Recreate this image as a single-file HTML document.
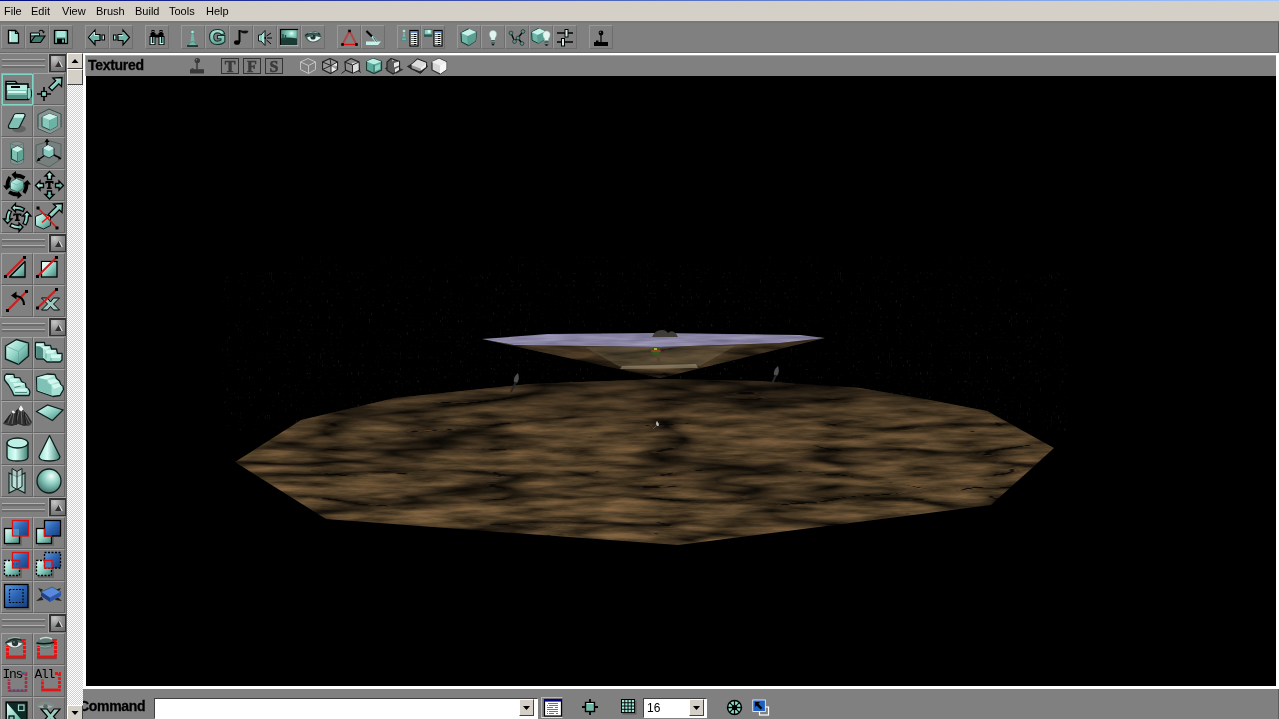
<!DOCTYPE html>
<html><head><meta charset="utf-8">
<style>
*{margin:0;padding:0;box-sizing:border-box}
html,body{width:1279px;height:719px;overflow:hidden;background:#808080;font-family:"Liberation Sans",sans-serif}
.gs{will-change:transform}
.a{position:absolute}
#top{left:0;top:0;width:1279px;height:1px;background:linear-gradient(90deg,#000a80,#a0c8ff)}
#menu{left:0;top:1px;width:1279px;height:20px;background:#d4d0c8;font-size:11px;color:#000}
#menu span{position:absolute;top:4px}
#tb{left:0;top:21px;width:1279px;height:32px;background:#808080;border-top:2px solid #787878;border-bottom:1px solid #6a6a6a;border-right:1px solid #5e5e5e}
.tbtn{position:absolute;top:25px;width:24px;height:24px;border:1px solid #999;border-right-color:#6e6e6e;border-bottom-color:#6e6e6e}
#lp{left:0;top:53px;width:67px;height:666px;background:#808080;border-right:1px solid #6a6a6a}
#sb{left:67px;top:53px;width:16px;height:666px;background-color:#fff;background-image:linear-gradient(45deg,#d4d0c8 25%,transparent 25%,transparent 75%,#d4d0c8 75%),linear-gradient(45deg,#d4d0c8 25%,transparent 25%,transparent 75%,#d4d0c8 75%);background-size:2px 2px;background-position:0 0,1px 1px}
.sbtn{position:absolute;left:67px;width:16px;height:16px;background:#d4d0c8;border:1px solid;border-color:#fff #404040 #404040 #fff}
#vpw{left:83px;top:53px;width:1196px;height:636px;background:#fff}
#vph{left:85px;top:55px;width:1191px;height:21px;background:#808080;border-top:1px solid #a8a8a8;border-left:1px solid #a8a8a8}
#vp{left:86px;top:76px;width:1190px;height:610px;background:#000;overflow:hidden}
#bb{left:83px;top:689px;width:1196px;height:30px;background:#808080;border-right:1px solid #5e5e5e}

.lc{position:absolute;width:32px;height:32px;border-top:1px solid #a4a4a4;border-left:1px solid #a4a4a4;border-right:1px solid #626262;border-bottom:1px solid #626262}
.lh{position:absolute;left:0;width:66px;height:20px;border-top:1px solid #a4a4a4}
.gr{position:absolute;left:2px;width:43px;height:3px;border-top:1px solid #b0b0b0;background:#6c6c6c}
.tri{position:absolute;left:49px;top:0px;width:17px;height:18px;border:1px solid #333;border-width:2px 1px 1px 2px;background:radial-gradient(circle at 25% 15%,#c8c8c8,#8a8a8a 50%,#666)}

.hb{position:absolute;top:58px;width:18px;height:16px;border:1px solid #333;font-family:"Liberation Serif",serif;font-weight:bold;font-size:16px;line-height:15px;text-align:center;color:#3a3a3a;-webkit-text-stroke:0.6px #3a3a3a}

.cb{position:absolute;background:#fff;border-top:1px solid #404040;border-left:1px solid #404040;box-shadow:1px 1px 0 #fff}
.dd{position:absolute;width:15px;height:17px;background:#d4d0c8;border:1px solid;border-color:#fff #404040 #404040 #fff}
</style></head><body><div class="gs a" style="left:0;top:0;width:1279px;height:719px">
<div id="top" class="a"></div>
<div id="menu" class="a">
<span style="left:4px">File</span><span style="left:31px">Edit</span><span style="left:62px">View</span><span style="left:96px">Brush</span><span style="left:135px">Build</span><span style="left:169px">Tools</span><span style="left:206px">Help</span>
</div>
<div id="tb" class="a"></div>
<div class="tbtn" style="left:1px"></div><svg class="a" style="left:1px;top:25px" width="24" height="24" viewBox="0 0 24 24"><path d="M7.5 5.5h7l3 3v9.5h-10z" fill="#a8e6dc" stroke="#000" stroke-width="1.3"/><path d="M8.5 6.5h1v10" stroke="#dffaf4" stroke-width="1" fill="none"/><path d="M14.5 5.5v3h3" fill="none" stroke="#000" stroke-width="1.2"/></svg>
<div class="tbtn" style="left:25px"></div><svg class="a" style="left:25px;top:25px" width="24" height="24" viewBox="0 0 24 24"><path d="M5.5 8h9v3h-9z" fill="#a8e6dc" stroke="#000"/><path d="M5.5 8v9.5h10l4.5-6.5h-10l-4.5 6.5" fill="#3d7a70" stroke="#000" stroke-width="1.2"/><path d="M14 6.5q2-2.5 4.5 0" fill="none" stroke="#000" stroke-width="1.1"/><path d="M17 6.5h3l-1.5 2z" fill="#000"/></svg>
<div class="tbtn" style="left:49px"></div><svg class="a" style="left:49px;top:25px" width="24" height="24" viewBox="0 0 24 24"><rect x="5.5" y="5.5" width="13" height="13" fill="#6fb5a8" stroke="#000" stroke-width="1.3"/><rect x="7.5" y="6" width="9" height="6" fill="#a8e6dc"/><rect x="8" y="13.5" width="8" height="5" fill="#000"/><rect x="13" y="14.5" width="2" height="3" fill="#6fb5a8"/></svg>
<div class="tbtn" style="left:85px"></div><svg class="a" style="left:85px;top:25px" width="24" height="24" viewBox="0 0 24 24"><path d="M3.5 12.5l6.5-7.5v4.5h5v6h-5v4.5z" fill="#6fb5a8" stroke="#000" stroke-width="1.2"/><path d="M4.5 12.5l5-5.5v3.5h4" fill="none" stroke="#cdeee8" stroke-width="1"/><rect x="17" y="10" width="2.5" height="5" fill="#a8e6dc" stroke="#000" stroke-width="1"/></svg>
<div class="tbtn" style="left:109px"></div><svg class="a" style="left:109px;top:25px" width="24" height="24" viewBox="0 0 24 24"><path d="M20.5 12.5l-6.5-7.5v4.5h-5v6h5v4.5z" fill="#6fb5a8" stroke="#000" stroke-width="1.2"/><path d="M9.5 10.5h4.5v-3.5" fill="none" stroke="#cdeee8" stroke-width="1"/><rect x="4.5" y="10" width="2.5" height="5" fill="#a8e6dc" stroke="#000" stroke-width="1"/></svg>
<div class="tbtn" style="left:145px"></div><svg class="a" style="left:145px;top:25px" width="24" height="24" viewBox="0 0 24 24"><rect x="6.5" y="5" width="3" height="3" fill="#000"/><rect x="14.5" y="5" width="3" height="3" fill="#000"/><rect x="5.5" y="8" width="5" height="4" fill="#000"/><rect x="13.5" y="8" width="5" height="4" fill="#000"/><rect x="9" y="9.5" width="6" height="3" fill="#000"/><rect x="4.5" y="11" width="6" height="9" fill="#000"/><rect x="13.5" y="11" width="6" height="9" fill="#000"/><rect x="5.5" y="12" width="1.6" height="6" fill="#a8e6dc"/><rect x="8.2" y="12" width="1.4" height="6" fill="#6fb5a8"/><rect x="14.5" y="12" width="1.6" height="6" fill="#a8e6dc"/><rect x="17.2" y="12" width="1.4" height="6" fill="#6fb5a8"/><rect x="5.5" y="18" width="4" height="1.2" fill="#e0f5f0"/><rect x="14.5" y="18" width="4" height="1.2" fill="#e0f5f0"/><rect x="7.5" y="6" width="1" height="1" fill="#ccc"/><rect x="15.5" y="6" width="1" height="1" fill="#ccc"/></svg>
<div class="tbtn" style="left:181px"></div><svg class="a" style="left:181px;top:25px" width="24" height="24" viewBox="0 0 24 24"><circle cx="11.5" cy="7" r="1.8" fill="#a8e6dc" stroke="#3d7a70" stroke-width=".6"/><path d="M10.5 9h2l1 8h-4z" fill="#6fb5a8"/><path d="M7 21q1-4 4.5-4.5q3.5.5 4.5 4.5z" fill="#6fb5a8" stroke="#3d7a70" stroke-width=".6"/><path d="M6 21h11" stroke="#000" stroke-width="1.2"/></svg>
<div class="tbtn" style="left:205px"></div><svg class="a" style="left:205px;top:25px" width="24" height="24" viewBox="0 0 24 24"><defs><linearGradient id="gG" x1="0" y1="0" x2="0" y2="1"><stop offset="0" stop-color="#c8f5ec"/><stop offset=".6" stop-color="#7cbfb1"/><stop offset="1" stop-color="#4a8c80"/></linearGradient></defs><text x="12.3" y="19.3" font-family="Liberation Sans" font-weight="bold" font-size="21" text-anchor="middle" fill="url(#gG)" stroke="#0f2e29" stroke-width="2.2" paint-order="stroke">G</text></svg>
<div class="tbtn" style="left:229px"></div><svg class="a" style="left:229px;top:25px" width="24" height="24" viewBox="0 0 24 24"><path d="M10.5 5v12" stroke="#000" stroke-width="2"/><path d="M10.5 5q3 1 6.5 .5q1.5 0 2.5 .5q-1 2.5-3 2.5q-3 0-5-1.5z" fill="#111"/><ellipse cx="8" cy="17.5" rx="3" ry="2.3" fill="#000"/></svg>
<div class="tbtn" style="left:253px"></div><svg class="a" style="left:253px;top:25px" width="24" height="24" viewBox="0 0 24 24"><path d="M5.5 10h2.5l4-4.5v15l-4-4.5h-2.5z" fill="#a8e6dc" stroke="#111" stroke-width="1"/><path d="M8 10v6" stroke="#6fb5a8" stroke-width="1.2"/><circle cx="12.2" cy="13" r=".9" fill="#000"/><path d="M14 13h5M13.5 11l4.5-3M13.5 15l4.5 4" stroke="#000" stroke-width="1"/></svg>
<div class="tbtn" style="left:277px"></div><svg class="a" style="left:277px;top:25px" width="24" height="24" viewBox="0 0 24 24"><defs><radialGradient id="lsky" cx=".65" cy=".25" r=".7"><stop offset="0" stop-color="#e8fff8"/><stop offset=".25" stop-color="#8fd6c6"/><stop offset="1" stop-color="#3f7f72"/></radialGradient></defs><rect x="3.5" y="4.5" width="17" height="15.5" fill="url(#lsky)" stroke="#000" stroke-width="1.2"/><path d="M4 13.5q6-2 16 0v6h-16z" fill="#1a3a33"/><path d="M6 9v6M8.5 10v5" stroke="#1f4a42" stroke-width="1.4"/><path d="M3 20.6h18M20.8 5v15.8" stroke="#d8d8d8" stroke-width=".8"/></svg>
<div class="tbtn" style="left:301px"></div><svg class="a" style="left:301px;top:25px" width="24" height="24" viewBox="0 0 24 24"><path d="M3.5 11q7-6 13-4q3 1 4 5q-2 5-8 5.5q-6 .5-9-6.5z" fill="#3f5e59"/><path d="M6 12.5q6-3 14 0q-4 4-8 4t-6-4z" fill="#e4f2ef"/><circle cx="12" cy="12" r="2.6" fill="#1e3430"/><circle cx="11" cy="11" r=".7" fill="#cde"/><path d="M4 10.5q8-6 15-1" fill="none" stroke="#1a2b28" stroke-width="1.4"/><path d="M7 8q5-2 10 0" fill="none" stroke="#8fb0aa" stroke-width="1"/></svg>
<div class="tbtn" style="left:337px"></div><svg class="a" style="left:337px;top:25px" width="24" height="24" viewBox="0 0 24 24"><path d="M12.5 6l-7 13.5M12.5 6l7 13.5" stroke="#b04848" stroke-width="2"/><path d="M5.5 19.5h14" stroke="#e01010" stroke-width="1.4"/><rect x="11.2" y="4.7" width="2.6" height="2.6" fill="#000"/><rect x="4.2" y="18.2" width="2.6" height="2.6" fill="#000"/><rect x="18.2" y="18.2" width="2.6" height="2.6" fill="#000"/></svg>
<div class="tbtn" style="left:361px"></div><svg class="a" style="left:361px;top:25px" width="24" height="24" viewBox="0 0 24 24"><path d="M5 16.5h15l-3 3.5h-12z" fill="#c8f0e8"/><path d="M5.5 6l6 6" stroke="#000" stroke-width="2.2"/><path d="M11 11.5l4.5 5" stroke="#a8e6dc" stroke-width="2"/><path d="M12.5 12.5l3 4" stroke="#2a4f49" stroke-width="1"/></svg>
<div class="tbtn" style="left:397px"></div><svg class="a" style="left:397px;top:25px" width="24" height="24" viewBox="0 0 24 24"><circle cx="7" cy="6" r="1.3" fill="#a8e6dc"/><path d="M6.3 7.5h1.4l.8 5h-3z" fill="#6fb5a8"/><path d="M4 15.5q.8-3 3-3q2.2 0 3 3z" fill="#6fb5a8" stroke="#3d7a70" stroke-width=".5"/><rect x="13" y="5.5" width="8" height="15.5" fill="#e8f5f2" stroke="#000" stroke-width="1.2"/><rect x="13.6" y="6.1" width="6.8" height="1.6" fill="#3a6fc8"/><path d="M14.5 9.5h1M16.5 9.5h3M14.5 11.5h1M16.5 11.5h3M14.5 13.5h1M16.5 13.5h3M14.5 15.5h1M16.5 15.5h3M14.5 17.5h1M16.5 17.5h3M14.5 19.5h1M16.5 19.5h3" stroke="#000" stroke-width="1"/></svg>
<div class="tbtn" style="left:421px"></div><svg class="a" style="left:421px;top:25px" width="24" height="24" viewBox="0 0 24 24"><rect x="3" y="4.2" width="8.3" height="7.7" fill="#2d5a52"/><rect x="3.6" y="4.8" width="7" height="4.5" fill="#8fcfc2"/><circle cx="8" cy="6.5" r="1.4" fill="#d6fff6"/><rect x="13" y="5.5" width="8" height="15.5" fill="#e8f5f2" stroke="#000" stroke-width="1.2"/><rect x="13.6" y="6.1" width="6.8" height="1.6" fill="#3a6fc8"/><path d="M14.5 9.5h1M16.5 9.5h3M14.5 11.5h1M16.5 11.5h3M14.5 13.5h1M16.5 13.5h3M14.5 15.5h1M16.5 15.5h3M14.5 17.5h1M16.5 17.5h3M14.5 19.5h1M16.5 19.5h3" stroke="#000" stroke-width="1"/></svg>
<div class="tbtn" style="left:457px"></div><svg class="a" style="left:457px;top:25px" width="24" height="24" viewBox="0 0 24 24"><g transform="translate(0 0) scale(1)"><path d="M4 8l7-4l8.5 3l-1 9l-7 4.5l-7-3.5z" fill="#6fb5a8" stroke="#1d3b36" stroke-width="1.1"/><path d="M4 8l7 3l8.5-4l-7-3z" fill="#c5f2ea"/><path d="M11 11l.5 9.5" stroke="#3d7a70" stroke-width=".8"/><path d="M11 11l8.5-4l-1 9l-7 4.5z" fill="#5a9e92"/></g></svg>
<div class="tbtn" style="left:481px"></div><svg class="a" style="left:481px;top:25px" width="24" height="24" viewBox="0 0 24 24"><g transform="translate(0 0)"><path d="M12 5.5a3.6 3.6 0 0 1 3.6 3.8q0 2-1.6 4v2h-4v-2q-1.6-2-1.6-4a3.6 3.6 0 0 1 3.6-3.8z" fill="#e2f4ef" stroke="#8fb8b0" stroke-width=".5"/><rect x="10.2" y="15.3" width="3.6" height="4" fill="#243d38"/><path d="M10.2 16.5h3.6M10.2 18h3.6" stroke="#9cc" stroke-width=".6"/><rect x="11" y="19" width="2" height="1.3" fill="#111"/></g></svg>
<div class="tbtn" style="left:505px"></div><svg class="a" style="left:505px;top:25px" width="24" height="24" viewBox="0 0 24 24"><path d="M6 8l3.5 8M18 6.5l-5 6.5M13 13l4 5.5M9.5 16l3.5-3" stroke="#000" stroke-width="1.3"/><circle cx="6" cy="8" r="1.9" fill="#5f8f86" stroke="#1a2a28" stroke-width=".7"/><circle cx="18" cy="6.5" r="1.9" fill="#5f8f86" stroke="#1a2a28" stroke-width=".7"/><circle cx="13" cy="13" r="1.9" fill="#5f8f86" stroke="#1a2a28" stroke-width=".7"/><circle cx="9.5" cy="16.5" r="1.9" fill="#5f8f86" stroke="#1a2a28" stroke-width=".7"/><circle cx="17" cy="18.5" r="1.9" fill="#5f8f86" stroke="#1a2a28" stroke-width=".7"/></svg>
<div class="tbtn" style="left:529px"></div><svg class="a" style="left:529px;top:25px" width="24" height="24" viewBox="0 0 24 24"><g transform="translate(-1 0) scale(0.9)"><path d="M4 8l7-4l8.5 3l-1 9l-7 4.5l-7-3.5z" fill="#6fb5a8" stroke="#1d3b36" stroke-width="1.1"/><path d="M4 8l7 3l8.5-4l-7-3z" fill="#c5f2ea"/><path d="M11 11l.5 9.5" stroke="#3d7a70" stroke-width=".8"/><path d="M11 11l8.5-4l-1 9l-7 4.5z" fill="#5a9e92"/></g><g transform="translate(5.5 0.5)"><path d="M12 5.5a3.6 3.6 0 0 1 3.6 3.8q0 2-1.6 4v2h-4v-2q-1.6-2-1.6-4a3.6 3.6 0 0 1 3.6-3.8z" fill="#e2f4ef" stroke="#8fb8b0" stroke-width=".5"/><rect x="10.2" y="15.3" width="3.6" height="4" fill="#243d38"/><path d="M10.2 16.5h3.6M10.2 18h3.6" stroke="#9cc" stroke-width=".6"/><rect x="11" y="19" width="2" height="1.3" fill="#111"/></g></svg>
<div class="tbtn" style="left:553px"></div><svg class="a" style="left:553px;top:25px" width="24" height="24" viewBox="0 0 24 24"><path d="M4 8h16M4 17h16" stroke="#000" stroke-width="1.6"/><rect x="12" y="4.5" width="3" height="7.5" fill="#d8f0ea" stroke="#000" stroke-width="1"/><rect x="8.5" y="13.5" width="3" height="7.5" fill="#d8f0ea" stroke="#000" stroke-width="1"/></svg>
<div class="tbtn" style="left:589px"></div><svg class="a" style="left:589px;top:25px" width="24" height="24" viewBox="0 0 24 24"><circle cx="12" cy="8" r="2.4" fill="#000"/><path d="M12 9v8" stroke="#000" stroke-width="1.2"/><rect x="5" y="17" width="14" height="4" fill="#000"/><rect x="7" y="15.5" width="2.5" height="1.5" fill="#000"/><circle cx="11.3" cy="7.3" r=".7" fill="#888"/></svg>
<div id="lp" class="a"></div>
<svg width="0" height="0" class="a"><defs>
<linearGradient id="gt" x1="0" y1="0" x2="1" y2="1"><stop offset="0" stop-color="#e6fffa"/><stop offset=".5" stop-color="#8fd3c5"/><stop offset="1" stop-color="#3e7f74"/></linearGradient>
<linearGradient id="gb" x1="0" y1="0" x2="1" y2="1"><stop offset="0" stop-color="#5e9be0"/><stop offset=".5" stop-color="#2a62b0"/><stop offset="1" stop-color="#173e7a"/></linearGradient>
<radialGradient id="gs" cx=".6" cy=".3" r=".8"><stop offset="0" stop-color="#f0fffb"/><stop offset=".4" stop-color="#8fcfc2"/><stop offset="1" stop-color="#2f5f58"/></radialGradient>
<linearGradient id="gc" x1="0" y1="0" x2="1" y2="0"><stop offset="0" stop-color="#9fe0d2"/><stop offset=".4" stop-color="#d8fff7"/><stop offset="1" stop-color="#3d7f73"/></linearGradient>
</defs></svg>
<div class="lh" style="top:53px"><div class="gr" style="top:5px"></div><div class="gr" style="top:11px"></div><div class="a" style="left:48px;top:0;width:1px;height:19px;background:#a4a4a4"></div><div class="tri"><svg class="a" style="left:0;top:0" width="15" height="15" viewBox="0 0 15 15"><path d="M8.5 4l-4.5 7h8z" fill="#2e2e2e"/><path d="M8.5 4l3.5 7h-1.5l-2.5-5z" fill="#e0e0e0"/></svg></div></div>
<div class="lc" style="left:1px;top:73px"></div><div class="a" style="left:2px;top:74px;width:31px;height:31px;border:1px solid #7fd6c4"></div><svg class="a" style="left:1px;top:73px" width="32" height="32" viewBox="0 0 32 32"><path d="M5 8.5h9.5l2 2.5h-11.5z" fill="#c9f2ea" stroke="#000" stroke-width="1.4"/><rect x="5" y="11" width="22" height="15.5" fill="#7fc0b2" stroke="#000" stroke-width="1.5"/><rect x="6" y="12" width="20" height="5" fill="#b9ece2"/><rect x="10" y="13" width="9" height="2" fill="#000"/><rect x="7" y="18" width="18" height="2" fill="#d6f7f0"/><rect x="6" y="22" width="20" height="3.5" fill="#4f8f84"/><path d="M26.5 14.5q4 0 4 6t-4 6z" fill="#5aa396" stroke="#000" stroke-width="1"/><rect x="26.5" y="15" width="3" height="10.5" fill="#8fd0c2"/></svg>
<div class="lc" style="left:33px;top:73px"></div><svg class="a" style="left:33px;top:73px" width="32" height="32" viewBox="0 0 32 32"><path d="M11 14v14M4 21h14" stroke="#000" stroke-width="1.6"/><rect x="8.5" y="18.5" width="5" height="5" fill="#86c9bb" stroke="#000" stroke-width="1.2"/><path d="M15.9 14.4L22.7 7.7L20 5L29 4.5L28.5 13.5L25.8 10.8L19.1 17.6z" fill="url(#gt)" stroke="#000" stroke-width="1.3"/></svg>
<div class="lc" style="left:1px;top:105px"></div><svg class="a" style="left:1px;top:105px" width="32" height="32" viewBox="0 0 32 32"><ellipse cx="18" cy="24" rx="7" ry="3.5" fill="#555" opacity=".7"/><path d="M7.5 20.5l5.5-10.5q.8-1.5 2.5-1.5h7q2 .5 1.5 2.5l-5.5 11q-.8 1.5-2.5 1.5h-7q-2-.5-1.5-3z" fill="#7fc0b2" stroke="#0d1f1c" stroke-width="1.2"/><path d="M13.5 10q.7-.8 2-.8h7q1 .3.5 1.5l-1 2h-9.5z" fill="#c8f3ea"/></svg>
<div class="lc" style="left:33px;top:105px"></div><svg class="a" style="left:33px;top:105px" width="32" height="32" viewBox="0 0 32 32"><path d="M5 9.5l11-5.5l12 5v13.5l-11 6l-12-5z" fill="#9aaeaa" fill-opacity=".45" stroke="#2c4a45" stroke-width="1"/><path d="M9 12l7.5-3.5l8 3v9.5l-7.5 4l-8-3.5z" fill="#86c9bb" stroke="#1b3a35" stroke-width=".9"/><path d="M9 12l7.5-3.5l8 3l-7.5 3.5z" fill="#c9f2ea"/><path d="M17 15v10" stroke="#3f7f74" stroke-width=".8"/><path d="M17 15l7.5-3.5v9.5l-7.5 4z" fill="#6db3a5"/><path d="M5 22.5l12 5.5l11-5.5" fill="none" stroke="#cfe" stroke-width=".6" opacity=".5"/></svg>
<div class="lc" style="left:1px;top:137px"></div><svg class="a" style="left:1px;top:137px" width="32" height="32" viewBox="0 0 32 32"><path d="M9.5 6.5q6.5-4 13 0v19q-6.5 4-13 0z" fill="#8fa8a3" fill-opacity=".45" stroke="#5b7571" stroke-width=".9"/><path d="M9.5 6.5q6.5 4 13 0" fill="none" stroke="#5b7571" stroke-width=".8"/><path d="M10.5 12l6-3l6 3v10l-6 3l-6-3z" fill="#7fc2b4" stroke="#123a34" stroke-width="1.1"/><path d="M10.5 12l6 3l6-3l-6-3z" fill="#c9f2ea"/><path d="M16.5 15v10" stroke="#1f4a43" stroke-width=".9"/><path d="M16.5 15l6-3v10l-6 3z" fill="#5ea596"/></svg>
<div class="lc" style="left:33px;top:137px"></div><svg class="a" style="left:33px;top:137px" width="32" height="32" viewBox="0 0 32 32"><path d="M3 8l14-4l11 3v15l-12 8l-13-5z" fill="#6f7f7c" fill-opacity=".5" stroke="#4a5a57" stroke-width=".8"/><path d="M14 3v10M15 16l-10 7M17 16l10 5" stroke="#000" stroke-width="1.5"/><path d="M14 1.5l-2.5 3.5h5zM3.5 24.5l4-1l-2-3zM28.5 22l-3.5.5l1.5-3z" fill="#000"/><path d="M10 11l5-3l6 3v7l-5 3l-6-3z" fill="#86c9bb" stroke="#113" stroke-width=".8"/><path d="M10 11l6 3l5-3l-6-3z" fill="#c9f2ea"/></svg>
<div class="lc" style="left:1px;top:169px"></div><svg class="a" style="left:1px;top:169px" width="32" height="32" viewBox="0 0 32 32"><g fill="#000"><path d="M10.5 5.5l4.5-3.5v2.5q5 0 9.5 3l-2 3q-3.5-2-7.5-2v2.5z"/><path d="M26.5 11l3.5 4.5h-2.5q0 5-3 9.5l-3-2q2-3.5 2-7.5h-2.5z"/><path d="M21 26.5l-4.5 3.5v-2.5q-5 0-9.5-3l2-3q3.5 2 7.5 2v-2.5z"/><path d="M5.5 21l-3.5-4.5h2.5q0-5 3-9.5l3 2q-2 3.5-2 7.5h2.5z"/></g><path d="M9.5 13l6-3.5l7 3v7l-6 3.5l-7-3z" fill="url(#gt)" stroke="#2a5a52" stroke-width=".8"/><path d="M9.5 13l6.5 3l6.5-3.5" fill="none" stroke="#6aa89c" stroke-width=".6"/></svg>
<div class="lc" style="left:33px;top:169px"></div><svg class="a" style="left:33px;top:169px" width="32" height="32" viewBox="0 0 32 32"><path d="M16.5 2.5l-4.5 4.5h2.5v3.5h4v-3.5h2.5zM16.5 30l-4.5-4.5h2.5v-3.5h4v3.5h2.5zM2.5 16.5l4.5-4.5v2.5h3.5v4h-3.5v2.5zM30.5 16.5l-4.5-4.5v2.5h-3.5v4h3.5v2.5z" fill="url(#gt)" stroke="#000" stroke-width="1.4" stroke-linejoin="miter"/><path d="M12.5 12h8v2.8h-1.3l-.2-.8h-1.5v4.5h1.2v1.5h-4.8v-1.5h1.2v-4.5h-1.5l-.2.8h-1.3z" fill="#000"/></svg>
<div class="lc" style="left:1px;top:201px"></div><svg class="a" style="left:1px;top:201px" width="32" height="32" viewBox="0 0 32 32"><g stroke="#000" stroke-width="1.3" fill="url(#gt)" stroke-linejoin="miter"><path d="M10.5 7l4-4.5v2.5q5 0 9 2.5l-1.5 3q-3.5-2-7.5-2v2.5z"/><path d="M26 10.5l4 4.5h-2.5q0 5-2.5 9l-3-1.5q2-3.5 2-7.5h-2.5z"/><path d="M22 26l-4 4.5v-2.5q-5 0-9-2.5l1.5-3q3.5 2 7.5 2v-2.5z"/><path d="M6.5 22.5l-4-4.5h2.5q0-5 2.5-9l3 1.5q-2 3.5-2 7.5h2.5z"/></g><path d="M12.5 12.5h8v2.6h-1.3l-.2-.8h-1.5v4.3h1.2v1.4h-4.8v-1.4h1.2v-4.3h-1.5l-.2.8h-1.3z" fill="#000"/></svg>
<div class="lc" style="left:33px;top:201px"></div><svg class="a" style="left:33px;top:201px" width="32" height="32" viewBox="0 0 32 32"><path d="M2.5 15.5l7-3l8 3v9l-7 3.5l-8-3.5z" fill="url(#gt)" stroke="#0d1f1c" stroke-width="1"/><path d="M5 7l19 20" stroke="#d21c1c" stroke-width="1.6"/><path d="M9 21.5l7-6" stroke="#f01010" stroke-width="1.6"/><rect x="3.5" y="5.5" width="3" height="3" fill="#000"/><rect x="22.5" y="25.5" width="3" height="3" fill="#000"/><path d="M15.4 13.4L23.2 5.7L20.5 3L29.5 2.5L29 11.5L26.3 8.8L18.6 16.6z" fill="url(#gt)" stroke="#000" stroke-width="1.3"/></svg>
<div class="lh" style="top:233px"><div class="gr" style="top:5px"></div><div class="gr" style="top:11px"></div><div class="a" style="left:48px;top:0;width:1px;height:19px;background:#a4a4a4"></div><div class="tri"><svg class="a" style="left:0;top:0" width="15" height="15" viewBox="0 0 15 15"><path d="M8.5 4l-4.5 7h8z" fill="#2e2e2e"/><path d="M8.5 4l3.5 7h-1.5l-2.5-5z" fill="#e0e0e0"/></svg></div></div>
<div class="lc" style="left:1px;top:253px"></div><svg class="a" style="left:1px;top:253px" width="32" height="32" viewBox="0 0 32 32"><path d="M25 10v15.5h-15.5z" fill="#3a3a3a" opacity=".35"/><path d="M24 8.5v15.5h-15.5z" fill="url(#gt)" stroke="#000" stroke-width="1.3" stroke-linejoin="round"/><path d="M4.5 23.5L23.5 4.5" stroke="#c82020" stroke-width="2.1"/><rect x="3.0" y="22.0" width="3" height="3" fill="#000"/><rect x="22.0" y="3.0" width="3" height="3" fill="#000"/></svg>
<div class="lc" style="left:33px;top:253px"></div><svg class="a" style="left:33px;top:253px" width="32" height="32" viewBox="0 0 32 32"><rect x="8.5" y="8.5" width="15.5" height="15.5" fill="url(#gt)" stroke="#000" stroke-width="1.3"/><path d="M9 9h12l-12 12z" fill="#dff8f2"/><path d="M4.5 23.5L23.5 4.5" stroke="#c82020" stroke-width="2.1"/><rect x="3.0" y="22.0" width="3" height="3" fill="#000"/><rect x="22.0" y="3.0" width="3" height="3" fill="#000"/></svg>
<div class="lc" style="left:1px;top:285px"></div><svg class="a" style="left:1px;top:285px" width="32" height="32" viewBox="0 0 32 32"><path d="M6.5 25.5L25.5 6.5" stroke="#c82020" stroke-width="2.1"/><rect x="5.0" y="24.0" width="3" height="3" fill="#000"/><rect x="24.0" y="5.0" width="3" height="3" fill="#000"/><path d="M23 20q0-8-8-9" fill="none" stroke="#000" stroke-width="2.2"/><path d="M10 10.5l5.5-4v8z" fill="#000"/></svg>
<div class="lc" style="left:33px;top:285px"></div><svg class="a" style="left:33px;top:285px" width="32" height="32" viewBox="0 0 32 32"><path d="M8.5 13h6l3 4l3-4h6l-6 6l6 6h-6l-3-3.5l-3 3.5h-6l6-6z" fill="#9cc9bf" stroke="#000" stroke-width="1"/><path d="M4.5 23L23.5 4.5" stroke="#c82020" stroke-width="2.1"/><rect x="3.0" y="21.5" width="3" height="3" fill="#000"/><rect x="22.0" y="3.0" width="3" height="3" fill="#000"/></svg>
<div class="lh" style="top:317px"><div class="gr" style="top:5px"></div><div class="gr" style="top:11px"></div><div class="a" style="left:48px;top:0;width:1px;height:19px;background:#a4a4a4"></div><div class="tri"><svg class="a" style="left:0;top:0" width="15" height="15" viewBox="0 0 15 15"><path d="M8.5 4l-4.5 7h8z" fill="#2e2e2e"/><path d="M8.5 4l3.5 7h-1.5l-2.5-5z" fill="#e0e0e0"/></svg></div></div>
<div class="lc" style="left:1px;top:337px"></div><svg class="a" style="left:1px;top:337px" width="32" height="32" viewBox="0 0 32 32"><path d="M4.5 9l11-6.5l12 3.5v13l-10 8.5l-13-5.5z" fill="url(#gt)" stroke="#0d1f1c" stroke-width="1.4"/><path d="M4.5 9l13 5.5l10-8.5" fill="none" stroke="#5a9e92" stroke-width=".6"/><path d="M17.5 14.5v13" stroke="#5a9e92" stroke-width=".6"/></svg>
<div class="lc" style="left:33px;top:337px"></div><svg class="a" style="left:33px;top:337px" width="32" height="32" viewBox="0 0 32 32"><path d="M2.5 5.5H11.5L12 8.5H17.5L18.5 12H23.5L24.5 16.5H29V23L27 25H14L10.5 22H4L2.5 20Z" fill="#a6e0d4" stroke="#0d1f1c" stroke-width="1.3" stroke-linejoin="round"/><path d="M3.2 6.5h8l-4 3h-4zM8 9.5h9.5l-3.5 3h-6zM13 13h10l-3 3.5h-7zM18 17.5h10.5l-1.5 3.5h-9z" fill="#d2f7ef"/><path d="M3.2 9v12h6.8v-9.5l-3-2z" fill="#4f8a80"/><path d="M13 16.5v5M18 21v3.5" stroke="#6aa89c" stroke-width="1"/></svg>
<div class="lc" style="left:1px;top:369px"></div><svg class="a" style="left:1px;top:369px" width="32" height="32" viewBox="0 0 32 32"><path d="M3.5 7L5.5 5L13 5.5L13.5 8.5L19 9L20.5 12.5L24.5 14.5L25 18L28 20.5L29 23L28 26.5H13L11 22L7.5 16L3.5 11Z" fill="#a6e0d4" stroke="#0d1f1c" stroke-width="1.3" stroke-linejoin="round"/><path d="M5 6h7.5l-5 3.5h-3zM8 9.5h10.5l-4 3.5h-5zM12 14h12l-4.5 3.5h-6zM14 19.5h13l-2 3h-11z" fill="#d2f7ef"/><path d="M13.5 18.5l6-1.5M14 23.5h12" stroke="#4f8a80" stroke-width="1.2"/></svg>
<div class="lc" style="left:33px;top:369px"></div><svg class="a" style="left:33px;top:369px" width="32" height="32" viewBox="0 0 32 32"><path d="M3.5 8L14 5L22 5.5L23.5 9.5L26.5 12L28 16L30 17L30.5 20.5L27 26.5L20 27.5L4 22Z" fill="#a6e0d4" stroke="#0d1f1c" stroke-width="1.3" stroke-linejoin="round"/><path d="M4.5 8.5l9.5-2.5l7.5.5l-8 4zM14 11l8.5-1l3 2.5l-8 3zM18 16l8-1.5l2.5 2.5l-7.5 3z" fill="#d2f7ef"/><path d="M4.5 9v12l14 5v-10l-4-2v-3z" fill="#7fc2b5"/></svg>
<div class="lc" style="left:1px;top:401px"></div><svg class="a" style="left:1px;top:401px" width="32" height="32" viewBox="0 0 32 32"><path d="M3 21l5-6l4-6l2 2l6-7l3 6l3 3l5 8l-2 3l-6 1l-6-2l-6 2l-6-1z" fill="#2e2e2e"/><g stroke="#6a6a6a" stroke-width="1" fill="none"><path d="M12 10l-5 12M13 12l-2 11M19 6l-4 17M20 7l1 16M22 10l4 13M24 13l5 9"/></g><g stroke="#1a1a1a" stroke-width="1.2" fill="none"><path d="M9 14l-6 9M16 9l-1 15M23 11l2 13"/></g><path d="M10.5 11l1.5-2l2.5 2.5l-2 1zM17.5 8l2.5-4l2.5 4.5l-2.5 2z" fill="#f4f4f4"/><path d="M2 22q3 2 6 0M25 24q3 1 5-2" stroke="#444" stroke-width="1.5" fill="none"/></svg>
<div class="lc" style="left:33px;top:401px"></div><svg class="a" style="left:33px;top:401px" width="32" height="32" viewBox="0 0 32 32"><path d="M3.5 10.5l11-6.5l15.5 5l-10.5 10.5z" fill="url(#gt)" stroke="#0d1f1c" stroke-width="1.3"/></svg>
<div class="lc" style="left:1px;top:433px"></div><svg class="a" style="left:1px;top:433px" width="32" height="32" viewBox="0 0 32 32"><path d="M6 10v14q0 4 10.5 4t10.5-4v-14z" fill="url(#gc)" stroke="#0d1f1c" stroke-width="1.3"/><ellipse cx="16.5" cy="10" rx="10.5" ry="5" fill="#bff0e6" stroke="#0d1f1c" stroke-width="1.3"/></svg>
<div class="lc" style="left:33px;top:433px"></div><svg class="a" style="left:33px;top:433px" width="32" height="32" viewBox="0 0 32 32"><path d="M16.5 2.5l-10.5 21q0 4.5 10.5 4.5t10.5-4.5z" fill="url(#gc)" stroke="#0d1f1c" stroke-width="1.3" stroke-linejoin="round"/></svg>
<div class="lc" style="left:1px;top:465px"></div><svg class="a" style="left:1px;top:465px" width="32" height="32" viewBox="0 0 32 32"><path d="M8 8l8 4l8-4v20l-8-4l-8 4z" fill="#a8ddd2" fill-opacity=".7" stroke="#0d1f1c" stroke-width="1.1"/><path d="M11 3.5l5 3l5-3v18l-5 3l-5-3z" fill="#d4f5ee" fill-opacity=".6" stroke="#0d1f1c" stroke-width="1"/><path d="M16 6.5v18" stroke="#0d1f1c" stroke-width="1"/></svg>
<div class="lc" style="left:33px;top:465px"></div><svg class="a" style="left:33px;top:465px" width="32" height="32" viewBox="0 0 32 32"><circle cx="16" cy="16" r="12" fill="url(#gs)" stroke="#0d1f1c" stroke-width="1.3"/></svg>
<div class="lh" style="top:497px"><div class="gr" style="top:5px"></div><div class="gr" style="top:11px"></div><div class="a" style="left:48px;top:0;width:1px;height:19px;background:#a4a4a4"></div><div class="tri"><svg class="a" style="left:0;top:0" width="15" height="15" viewBox="0 0 15 15"><path d="M8.5 4l-4.5 7h8z" fill="#2e2e2e"/><path d="M8.5 4l3.5 7h-1.5l-2.5-5z" fill="#e0e0e0"/></svg></div></div>
<div class="lc" style="left:1px;top:517px"></div><svg class="a" style="left:1px;top:517px" width="32" height="32" viewBox="0 0 32 32"><rect x="5" y="13" width="16" height="16" fill="#3a3a3a" opacity=".35"/><rect x="3.5" y="11.5" width="15" height="15" fill="url(#gt)" stroke="#000" stroke-width="1.3"/><rect x="11.5" y="3.5" width="16" height="15.5" fill="url(#gb)" stroke="#e01010" stroke-width="1.3"/><rect x="12" y="12" width="6" height="6.5" fill="#6aa6c0" fill-opacity=".6"/></svg>
<div class="lc" style="left:33px;top:517px"></div><svg class="a" style="left:33px;top:517px" width="32" height="32" viewBox="0 0 32 32"><rect x="5" y="13" width="16" height="16" fill="#3a3a3a" opacity=".35"/><rect x="3.5" y="11.5" width="15" height="15" fill="url(#gt)" stroke="#000" stroke-width="1.3"/><rect x="11.5" y="3.5" width="16" height="15.5" fill="url(#gb)" stroke="#000" stroke-width="1.3"/><path d="M11.5 11.5v7.5h7.5" fill="none" stroke="#e01010" stroke-width="1.3"/></svg>
<div class="lc" style="left:1px;top:549px"></div><svg class="a" style="left:1px;top:549px" width="32" height="32" viewBox="0 0 32 32"><rect x="5" y="13" width="16" height="16" fill="#3a3a3a" opacity=".35"/><rect x="3.5" y="11.5" width="15" height="15" fill="url(#gt)" stroke="#000" stroke-width="1.3" stroke-dasharray="2 1.5"/><rect x="11.5" y="3.5" width="16" height="15.5" fill="url(#gb)" stroke="#e01010" stroke-width="1.3"/><path d="M11.5 11.5h7v7" fill="none" stroke="#e01010" stroke-width="1.3"/><path d="M12 15h6" stroke="#234" stroke-dasharray="1.5 1.5" stroke-width=".8"/></svg>
<div class="lc" style="left:33px;top:549px"></div><svg class="a" style="left:33px;top:549px" width="32" height="32" viewBox="0 0 32 32"><rect x="5" y="13" width="16" height="16" fill="#3a3a3a" opacity=".35"/><rect x="3.5" y="11.5" width="15" height="15" fill="url(#gt)" stroke="#000" stroke-width="1.3" stroke-dasharray="2 1.5"/><rect x="11.5" y="3.5" width="16" height="15.5" fill="url(#gb)" stroke="#000" stroke-width="1.3" stroke-dasharray="2 1.5"/><rect x="11.5" y="11.5" width="7.5" height="7.5" fill="#4a7ab8" stroke="#e01010" stroke-width="1.3"/></svg>
<div class="lc" style="left:1px;top:581px"></div><svg class="a" style="left:1px;top:581px" width="32" height="32" viewBox="0 0 32 32"><rect x="5" y="5" width="24" height="24" fill="#444" opacity=".4"/><rect x="3.5" y="3.5" width="23.5" height="23" fill="url(#gb)" stroke="#000" stroke-width="1.3"/><rect x="8.5" y="8.5" width="13.5" height="13" fill="none" stroke="#000" stroke-width="1.2" stroke-dasharray="1.8 1.4"/></svg>
<div class="lc" style="left:33px;top:581px"></div><svg class="a" style="left:33px;top:581px" width="32" height="32" viewBox="0 0 32 32"><path d="M3 20l5.5-4.5l2 3.5zM29 20l-5-4.5l-2 3.5zM5 7l5 1.5l-2 3zM28 7l-5 1.5l2 3z" fill="#222"/><path d="M8 11l11-5l9 5l-11 6z" fill="#5a88e0" stroke="#142" stroke-width=".5"/><path d="M8 11v4l9 6v-4z" fill="#1e3f8a"/><path d="M17 17v4l11-6v-4z" fill="#2c56b0"/></svg>
<div class="lh" style="top:613px"><div class="gr" style="top:5px"></div><div class="gr" style="top:11px"></div><div class="a" style="left:48px;top:0;width:1px;height:19px;background:#a4a4a4"></div><div class="tri"><svg class="a" style="left:0;top:0" width="15" height="15" viewBox="0 0 15 15"><path d="M8.5 4l-4.5 7h8z" fill="#2e2e2e"/><path d="M8.5 4l3.5 7h-1.5l-2.5-5z" fill="#e0e0e0"/></svg></div></div>
<div class="lc" style="left:1px;top:633px"></div><svg class="a" style="left:1px;top:633px" width="32" height="32" viewBox="0 0 32 32"><path d="M4 10q8-10 19-2q-1 7-10 7q-7 0-9-5z" fill="#4e6662"/><path d="M5.5 10.5q8-3 16 0q-4 4-8 4t-8-4z" fill="#e6ecea"/><circle cx="14" cy="10" r="3.2" fill="#2a3836"/><circle cx="13" cy="9" r=".8" fill="#8aa"/><path d="M4.5 10q9-7 18-2" fill="none" stroke="#1c2a28" stroke-width="1.4"/><path d="M7 6q6-3 12-1" fill="none" stroke="#9fb8b4" stroke-width="1"/><path d="M20.5 7.5h3v15.5M6.5 22.5v-9.5" fill="none" stroke="#e41414" stroke-width="3" stroke-dasharray="3.2 1"/><path d="M5 24h19.8" stroke="#e41414" stroke-width="3"/><path d="M5 25.8h19.8" stroke="#2a3a30" stroke-width=".8" opacity=".6"/></svg>
<div class="lc" style="left:33px;top:633px"></div><svg class="a" style="left:33px;top:633px" width="32" height="32" viewBox="0 0 32 32"><path d="M3 10q9-11 20-2q-2 8-10 8t-10-6z" fill="#5f7b76"/><path d="M7 6q6-3 12 0" fill="none" stroke="#c8dcd8" stroke-width="1.5"/><path d="M3.5 10q9 2 19-1" fill="none" stroke="#111" stroke-width="1.6"/><path d="M6 13q6 2 12 0" fill="none" stroke="#8fa9a4" stroke-width="1"/><path d="M19.5 7.5h3v15.5M5.5 22.5v-9.5" fill="none" stroke="#e41414" stroke-width="3" stroke-dasharray="3.2 1"/><path d="M4 24h19.8" stroke="#e41414" stroke-width="3"/><path d="M4 25.8h19.8" stroke="#2a3a30" stroke-width=".8" opacity=".6"/></svg>
<div class="lc" style="left:1px;top:665px"></div><svg class="a" style="left:1px;top:665px" width="32" height="32" viewBox="0 0 32 32"><text x="1.5" y="12.5" font-family="Liberation Mono" font-size="13" letter-spacing="-1.3" fill="#000">Ins</text><path d="M20.5 8.5h4.5v17h-17v-11" fill="none" stroke="#a03048" stroke-width="2.6" stroke-dasharray="3 1"/><path d="M8 26.2h17" stroke="#2a5aa0" stroke-width="1.1"/><path d="M20 7.3h5" stroke="#2a7aa0" stroke-width="1"/></svg>
<div class="lc" style="left:33px;top:665px"></div><svg class="a" style="left:33px;top:665px" width="32" height="32" viewBox="0 0 32 32"><text x="1.5" y="12.5" font-family="Liberation Mono" font-size="13" letter-spacing="-1.3" fill="#000">All</text><path d="M22 8.5h4.5v15.5M9.5 23.5v-9" fill="none" stroke="#e41414" stroke-width="2.8" stroke-dasharray="3 1"/><path d="M8.2 25h19.6" stroke="#e41414" stroke-width="2.8"/></svg>
<div class="lc" style="left:1px;top:697px"></div><svg class="a" style="left:1px;top:697px" width="32" height="32" viewBox="0 0 32 32"><rect x="5" y="5" width="21" height="24" fill="#0e2a26" stroke="#000" stroke-width="1.2"/><path d="M6 6l19 22h-19z" fill="url(#gt)"/><rect x="17.5" y="8" width="5.5" height="5.5" fill="none" stroke="#a8d8ce" stroke-width="1.2"/><rect x="8" y="19" width="5" height="9" fill="#7fb5aa" stroke="#000" stroke-width="1.2"/></svg>
<div class="lc" style="left:33px;top:697px"></div><svg class="a" style="left:33px;top:697px" width="32" height="32" viewBox="0 0 32 32"><path d="M3 9q9-9 19 0q-9 6-19 0z" fill="#7d8c89"/><path d="M5 9.5q7.5-3 15 0q-7.5 4-15 0z" fill="#a4b0ae"/><circle cx="12.5" cy="9.5" r="2.3" fill="#5b6a67"/><path d="M8 12h6l3.5 4.5l3.5-4.5h6l-6.5 7.5l6.5 7.5h-6l-3.5-4.5l-3.5 4.5h-6l6.5-7.5z" fill="#9ccbc0" stroke="#000" stroke-width="1.2"/></svg>
<div id="sb" class="a"></div>
<div class="sbtn" style="top:53px"><svg class="a" style="left:0;top:0" width="14" height="14" viewBox="0 0 14 14"><path d="M3.5 9h7l-3.5-4z" fill="#000"/></svg></div>
<div class="sbtn" style="top:69px"></div>
<div class="sbtn" style="top:705px"><svg class="a" style="left:0;top:0" width="14" height="14" viewBox="0 0 14 14"><path d="M3.5 5h7l-3.5 4z" fill="#000"/></svg></div>
<div id="vpw" class="a"></div>
<div id="vph" class="a"></div>
<div class="a" style="left:88px;top:56px;font:bold 14px/18px 'Liberation Sans',sans-serif;color:#000;letter-spacing:-0.3px;-webkit-text-stroke:0.3px #000">Textured</div>
<svg class="a" style="left:186px;top:56px" width="22" height="20" viewBox="0 0 22 20"><circle cx="11.3" cy="4.6" r="2.7" fill="#383838"/><path d="M11 6v7.5" stroke="#383838" stroke-width="1.5"/><rect x="4" y="13.2" width="14" height="4.3" fill="#383838"/><rect x="5.5" y="12.2" width="2" height="1.2" fill="#383838"/><circle cx="10.5" cy="3.8" r=".7" fill="#888"/></svg>
<div class="hb" style="left:221px">T</div>
<div class="hb" style="left:243px">F</div>
<div class="hb" style="left:265px">S</div>
<svg class="a" style="left:300px;top:58px" width="22" height="17" viewBox="0 0 22 17"><path d="M8 .5l7.5 3.5v7.5l-7 4l-8-4v-7.5z M.5 4l8 3.5l7-3.5 M8.5 7.5v8" fill="none" stroke="#c4c4c4" stroke-width="1"/></svg>
<svg class="a" style="left:322px;top:58px" width="22" height="17" viewBox="0 0 22 17"><path d="M8 .5l7.5 3.5v7.5l-7 4l-8-4v-7.5z" fill="#9a9a9a" stroke="#222" stroke-width="1.2"/><path d="M9 7l6-3v4zM9 8l5.5 3.5l-5.5 3z" fill="#eee"/><path d="M.5 4l8.5 3.5l6.5-3.5M9 7.5v8M9 7.5l-8.5 4M9 7.5l-1-7" fill="none" stroke="#222" stroke-width="1"/></svg>
<svg class="a" style="left:341px;top:58px" width="22" height="17" viewBox="0 0 22 17"><path d="M10 .5l8 3.5l.5 8l-7 3l-7-3l-.5-8z" fill="#8c8c8c" stroke="#222" stroke-width="1.2"/><path d="M11 5l6.5-1v8l-6 3z" fill="#ddd"/><path d="M3.5 4l8 3l6.5-3M11.5 7v8" fill="none" stroke="#222" stroke-width="1"/><path d="M5 12l-4.5 3.5M17 12.5l3 2" stroke="#222" stroke-width="1"/></svg>
<svg class="a" style="left:366px;top:58px" width="22" height="17" viewBox="0 0 22 17"><path d="M7 .5l8.5 3v8.5l-7.5 3.5l-7.5-3.5v-8z" fill="#5ea89a" stroke="#1a3a35" stroke-width="1.2"/><path d="M.5 3.5l7.5 3l7.5-3l-8.5-3z" fill="#b8eee3"/><path d="M8 6.5v9" stroke="#2a5a52" stroke-width=".8"/><path d="M9 8l5 -2v5l-5 2z" fill="#8fd8c8"/></svg>
<svg class="a" style="left:384px;top:58px" width="22" height="17" viewBox="0 0 22 17"><path d="M.5 10.5l6-3.5l13 4.5l-7 4z" fill="#333"/><path d="M7 .5l8.5 3v8.5l-6.5 4l-6-3.5v-8.5z" fill="#5c5c5c" stroke="#222" stroke-width="1.2"/><path d="M10 5l5-1.5v4l-5 2zM11 11l4-2v3l-4 2.5z" fill="#e6e6e6"/><path d="M8 1.5l2 1l-1.5 1z" fill="#ccc"/></svg>
<svg class="a" style="left:407px;top:58px" width="22" height="17" viewBox="0 0 22 17"><path d="M.5 8.5l7-4l13 3.5l-7 7.5z" fill="#333" stroke="#222" stroke-width="1"/><path d="M4 7l6.5-6l9 3.5v5l-6.5 4.5l-9-3.5z" fill="#9a9a9a" stroke="#222" stroke-width="1.2"/><path d="M4 7l9.5 3.5l6-5.5l-9-3.5z" fill="#dcdcdc"/><path d="M14 12.5l5-3.5v-4l-5.5 5z" fill="#eee"/></svg>
<svg class="a" style="left:431px;top:58px" width="22" height="17" viewBox="0 0 22 17"><path d="M8 .5l7.5 3.5v7.5l-6.5 4.5l-8-4v-8z" fill="#d6d6d6" stroke="#2a2a2a" stroke-width="1.2"/><path d="M.5 4l8.5 3.5l6.5-3.5l-7.5-3.5z" fill="#efefef"/><path d="M9 7.5l6.5-3.5v7.5l-6.5 4.5z" fill="#f8f8f8"/></svg>
<div id="vp" class="a"><svg class="a" style="left:0;top:0" width="1190" height="611" viewBox="86 76 1190 611">
<defs>
<filter id="ftex" color-interpolation-filters="sRGB" x="0" y="0" width="100%" height="100%" filterUnits="userSpaceOnUse" primitiveUnits="userSpaceOnUse">
<feTurbulence type="fractalNoise" baseFrequency="0.02 0.15" numOctaves="5" seed="5" result="n"/>
<feColorMatrix in="n" type="matrix" values="1 0 0 0 0  1 0 0 0 0  1 0 0 0 0  0 0 0 0 1" result="m"/>
<feComponentTransfer in="m" result="g"><feFuncR type="table" tableValues="0.10 0.17 0.27 0.355 0.44 0.525 0.60"/><feFuncG type="table" tableValues="0.08 0.13 0.21 0.28 0.34 0.40 0.46"/><feFuncB type="table" tableValues="0.06 0.08 0.13 0.18 0.22 0.26 0.29"/></feComponentTransfer>
<feTurbulence type="turbulence" baseFrequency="0.006 0.04" numOctaves="2" seed="8" result="t"/>
<feColorMatrix in="t" type="matrix" values="1 0 0 0 0  1 0 0 0 0  1 0 0 0 0  0 0 0 0 1" result="tg"/>
<feComponentTransfer in="tg" result="cr"><feFuncR type="table" tableValues="0.15 0.6 0.92 1 1 1 1 1 1 1"/><feFuncG type="table" tableValues="0.15 0.6 0.92 1 1 1 1 1 1 1"/><feFuncB type="table" tableValues="0.15 0.6 0.92 1 1 1 1 1 1 1"/></feComponentTransfer>
<feGaussianBlur in="cr" stdDeviation="1 0.5" result="crb"/><feBlend in="g" in2="crb" mode="multiply" result="b"/>
<feComposite in="b" in2="SourceGraphic" operator="in"/>
</filter>
<filter id="fpur" color-interpolation-filters="sRGB" filterUnits="userSpaceOnUse" x="470" y="325" width="370" height="30" primitiveUnits="userSpaceOnUse">
<feTurbulence type="fractalNoise" baseFrequency="0.03 0.3" numOctaves="2" seed="2" result="n"/>
<feColorMatrix in="n" type="matrix" values=".25 0 0 0 .42  .25 0 0 0 .40  .25 0 0 0 .52  0 0 0 0 1" result="g"/>
<feComposite in="g" in2="SourceGraphic" operator="in"/>
</filter>
<filter id="fstar" color-interpolation-filters="sRGB" filterUnits="userSpaceOnUse" x="220" y="245" width="860" height="190" primitiveUnits="userSpaceOnUse">
<feTurbulence type="turbulence" baseFrequency="0.45 0.25" numOctaves="1" seed="11" result="n"/>
<feColorMatrix in="n" type="matrix" values="0 0 0 0 .75  0 0 0 0 .75  0 0 0 0 .8  3 0 0 0 -1.15"/>
<feComposite in2="SourceGraphic" operator="in"/>
</filter>
<linearGradient id="fade" x1="0" y1="0" x2="0" y2="1"><stop offset="0" stop-color="#fff" stop-opacity="0"/><stop offset=".35" stop-color="#fff" stop-opacity=".10"/><stop offset="1" stop-color="#fff" stop-opacity=".22"/></linearGradient>
<linearGradient id="dim" x1="0" y1="0" x2="0" y2="1"><stop offset="0" stop-color="#000" stop-opacity=".45"/><stop offset=".3" stop-color="#000" stop-opacity=".1"/><stop offset="1" stop-color="#000" stop-opacity="0"/></linearGradient>
</defs>
<rect x="222" y="272" width="846" height="160" fill="#fff" fill-opacity=".13" filter="url(#fstar)"/><rect x="290" y="255" width="720" height="17" fill="#fff" fill-opacity=".07" filter="url(#fstar)"/>
<polygon points="235,462 301,420 395,398 530,384 660,379 760,381 860,388 930,400 987,411 1054,448 991,505 678,545 500,532 326,519" fill="#fff" filter="url(#ftex)"/>
<polygon points="235,462 301,420 395,398 530,384 660,379 760,381 860,388 930,400 987,411 1054,448 991,505 678,545 500,532 326,519" fill="url(#dim)"/>
<polygon points="482,339 514,345 660,347 780,343 825,338 660,378" fill="#fff" filter="url(#ftex)"/><polygon points="482,339 514,345 660,347 780,343 825,338 660,378" fill="#000" opacity=".28"/>
<polygon points="585,347 735,346 700,366 620,367" fill="#c8b898" opacity=".16"/>
<polygon points="622,366 696,364 698,368 620,369" fill="#a89c80" opacity=".55"/>
<polygon points="482,339 548,334 660,333 800,335 825,338 780,343 660,347 514,345" fill="#fff" filter="url(#fpur)"/>
<path d="M652 337q3-7 10-7q4 0 6 3q3-3 6-1q3 2 4 5z" fill="#3f3c38"/>
<rect x="652" y="347" width="8" height="8" rx="3" fill="#35561e"/><path d="M651 351h10" stroke="#d83020" stroke-width="1"/><rect x="654" y="348" width="3" height="2" fill="#9ab838"/>
<path d="M518 373q-5 4-4 9l3 1q3-4 1-10z" fill="#4e4e4e"/><path d="M516 382l-5 10" stroke="#262626" stroke-width="2"/>
<path d="M778 366q-5 4-4 9l3 1q3-4 1-10z" fill="#4e4e4e"/><path d="M776 375l-4 9" stroke="#262626" stroke-width="2"/>
<path d="M657 421q-2 2.5 0 5h1.5q1-2.5-1.5-5z" fill="#b8b8b8"/><path d="M656 426l-3 3" stroke="#555" stroke-width="1"/>
</svg>
</div>
<div id="bb" class="a"></div>
<div class="a" style="left:83px;top:689px;width:1196px;height:30px;overflow:hidden"><div class="a" style="left:-4px;top:9px;font:bold 14px/17px 'Liberation Sans',sans-serif;color:#000;letter-spacing:-0.3px;-webkit-text-stroke:0.3px #000">Command</div></div>
<div class="cb" style="left:154px;top:698px;width:383px;height:20px"></div>
<div class="dd" style="left:519px;top:699px"><svg class="a" style="left:0;top:0" width="13" height="15" viewBox="0 0 13 15"><path d="M3 6h7l-3.5 4z" fill="#000"/></svg></div>
<div class="a" style="left:541px;top:697px;width:22px;height:21px;border:1px solid #b8b8b8;border-right-color:#777;border-bottom-color:#ddd"></div>
<svg class="a" style="left:543px;top:698px" width="20" height="20" viewBox="0 0 20 20"><rect x="1.5" y="1.5" width="17" height="16.5" fill="#fff" stroke="#000" stroke-width="1.2"/><rect x="1" y="1" width="18" height="2.6" fill="#000080"/><path d="M5 5.5h10M4 7.5h1M6 7.5h9M4 9.5h6M12 9.5h3M4 11.5h11M4 13.5h1M6 13.5h9M4 15.5h1M6 15.5h5M13 15.5h2" stroke="#1a9a9a" stroke-width="1"/></svg>
<svg class="a" style="left:581px;top:698px" width="18" height="18" viewBox="0 0 18 18"><path d="M9 1v16M1 9h16" stroke="#000" stroke-width="1.8"/><rect x="4.5" y="4.5" width="9" height="9" fill="#6fb8a8" stroke="#000" stroke-width="1.4"/><path d="M5.5 5.5h7" stroke="#bfeee4"/></svg>
<svg class="a" style="left:621px;top:699px" width="16" height="16" viewBox="0 0 16 16"><rect x="1.5" y="1.5" width="14" height="14" fill="#3a3a3a" opacity=".5"/><rect x="0" y="0" width="14" height="14" fill="#000"/><g fill="#9ee6d6"><rect x="1.00" y="1.00" width="2.3" height="2.3"/><rect x="1.00" y="4.25" width="2.3" height="2.3"/><rect x="1.00" y="7.50" width="2.3" height="2.3"/><rect x="1.00" y="10.75" width="2.3" height="2.3"/><rect x="4.25" y="1.00" width="2.3" height="2.3"/><rect x="4.25" y="4.25" width="2.3" height="2.3"/><rect x="4.25" y="7.50" width="2.3" height="2.3"/><rect x="4.25" y="10.75" width="2.3" height="2.3"/><rect x="7.50" y="1.00" width="2.3" height="2.3"/><rect x="7.50" y="4.25" width="2.3" height="2.3"/><rect x="7.50" y="7.50" width="2.3" height="2.3"/><rect x="7.50" y="10.75" width="2.3" height="2.3"/><rect x="10.75" y="1.00" width="2.3" height="2.3"/><rect x="10.75" y="4.25" width="2.3" height="2.3"/><rect x="10.75" y="7.50" width="2.3" height="2.3"/><rect x="10.75" y="10.75" width="2.3" height="2.3"/></g></svg>
<div class="cb" style="left:643px;top:698px;width:63px;height:19px"><div class="a" style="left:3px;top:2px;font:12px/14px 'Liberation Sans',sans-serif;color:#000">16</div></div>
<div class="dd" style="left:689px;top:699px"><svg class="a" style="left:0;top:0" width="13" height="15" viewBox="0 0 13 15"><path d="M3 6h7l-3.5 4z" fill="#000"/></svg></div>
<svg class="a" style="left:726px;top:699px" width="17" height="17" viewBox="0 0 17 17"><circle cx="8.5" cy="8.5" r="7.7" fill="#000"/><circle cx="8.5" cy="8.5" r="6.2" fill="#8ee0cc"/><g stroke="#000" stroke-width="1.3"><path d="M8.5 2v13M2 8.5h13M3.9 3.9l9.2 9.2M13.1 3.9l-9.2 9.2"/></g><circle cx="8.5" cy="8.5" r="2.6" fill="#000"/></svg>
<svg class="a" style="left:752px;top:699px" width="18" height="18" viewBox="0 0 18 18"><rect x="7.5" y="8" width="9" height="8" fill="none" stroke="#fff" stroke-width="1.2"/><rect x=".8" y="1" width="12.5" height="11.5" fill="#1c5fc4" stroke="#fff" stroke-width=".8"/><path d="M3 3h5l-1.7 1.7l4 4l-1.7 1.7l-4-4l-1.6 1.6z" fill="#000"/></svg>
</div></body></html>
